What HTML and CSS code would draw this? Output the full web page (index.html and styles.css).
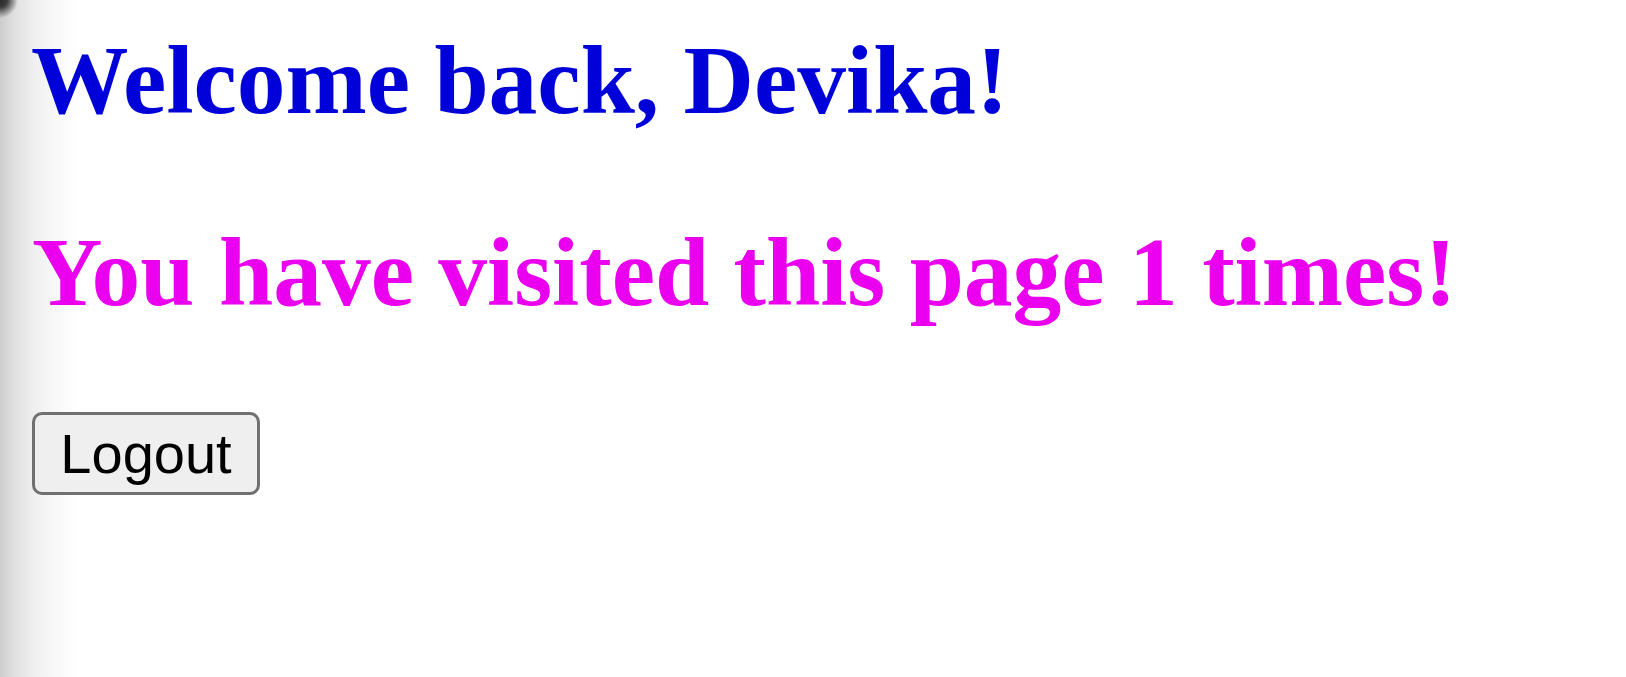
FILE: index.html
```html
<!DOCTYPE html>
<html>
<head>
<meta charset="utf-8">
<link rel="stylesheet" href="styles.css">
</head>
<body>
<div class="page">
  <h1 class="welcome">Welcome back, Devika!</h1>
  <h2 class="visits">You have visited this page 1 times!</h2>
  <form class="logout-form">
    <button type="button" class="logout">Logout</button>
  </form>
</div>
</body>
</html>
```

FILE: styles.css
```css
html, body {
  margin: 0;
  padding: 0;
  height: 100%;
  background: #ffffff;
}
.page {
  box-sizing: border-box;
  min-height: 100%;
  padding: 27px 0 0 31px;
  background:
    radial-gradient(circle at 0 0, #2a2a2a 0, #3a3a3a 7px, rgba(80,80,80,0) 18px),
    linear-gradient(to right, #cdcdcd 0, #e0e0e0 14px, #f0f0f0 35px, #fafafa 60px, #ffffff 80px);
  font-family: "Liberation Serif", "Times New Roman", serif;
}
.welcome {
  margin: 0;
  font-size: 97.5px;
  font-weight: bold;
  line-height: 106px;
  color: #0000d8;
}
.visits {
  margin: 86px 0 0 1px;
  font-size: 97.5px;
  font-weight: bold;
  line-height: 106px;
  color: #ea00ee;
}
.logout-form {
  margin: 87px 0 0 1px;
}
.logout {
  box-sizing: border-box;
  width: 228px;
  height: 83px;
  padding: 0;
  font-family: "Liberation Sans", Arial, sans-serif;
  font-size: 56px;
  color: #000000;
  background: #efefef;
  border: 3px solid #707070;
  border-radius: 10px;
}
```
